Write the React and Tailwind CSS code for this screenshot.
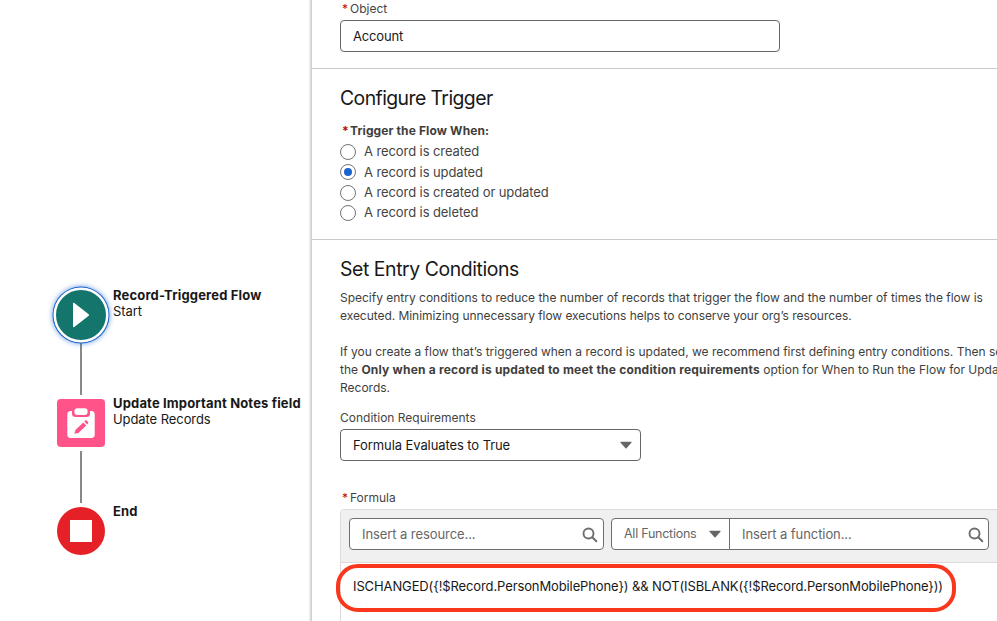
import React from "react";

const Star = () => <span className="mr-[2px] inline-block w-[6px] tracking-normal text-[#ba0517]">*</span>;

function Radio({ label, checked }) {
  return (
    <label className="flex h-[20.3px] items-center">
      <span className="flex size-4 items-center justify-center rounded-full border border-[#747474] bg-white">
        {checked && <span className="size-2 rounded-full bg-[#1b63cf]" />}
      </span>
      <span className="ml-2 text-[13px] tracking-[-0.09px] text-[#444]">{label}</span>
    </label>
  );
}

function Caret() {
  return (
    <svg width="12" height="8" viewBox="0 0 12 8" className="shrink-0">
      <path d="M1 .8h10c.5 0 .7.5.4.9L6.500 7.300a.7.7 0 0 1-1 0L.6 1.700C.3 1.300.5.8 1 .8z" fill="#666" />
    </svg>
  );
}

function Search() {
  return (
    <svg width="16" height="16" viewBox="0 0 16 16" className="mt-px shrink-0" fill="none" stroke="#706e6b">
      <circle cx="6.500" cy="6.500" r="5" strokeWidth="1.900" />
      <path d="M10.300 10.300l4 4" strokeWidth="2" strokeLinecap="round" />
    </svg>
  );
}

function Node({ icon, title, sub }) {
  return (
    <div className="flex h-12">
      {icon}
      <div className="ml-2 whitespace-nowrap text-[13px] leading-4 text-[#181818]">
        <div className="font-bold tracking-[0.16px]">{title}</div>
        {sub && <div className="tracking-[-0.08px]">{sub}</div>}
      </div>
    </div>
  );
}

function FlowCanvas() {
  return (
    <aside className="w-[312px] shrink-0 bg-white pl-[57px] pt-[287px]">
      <Node
        title="Record-Triggered Flow"
        sub="Start"
        icon={
          <div className="-ml-[3px] -mr-[3px] mt-px flex size-[54px] shrink-0 items-center justify-center rounded-full border-2 border-white bg-[#14756d] shadow-[0_0_0_0.5px_#fff,0_0_0_1.5px_#1b63cf,0_0_5px_2px_rgba(27,99,207,0.55)]">
            <svg width="54" height="54" viewBox="0 0 54 54" className="shrink-0">
              <path d="M19 15.600c0-.9.700-1 1.300-.5L34.700 26.200c.5.500.5 1.100 0 1.600L20.300 38.900c-.6.500-1.300.4-1.300-.5z" fill="#fff" />
            </svg>
          </div>
        }
      />
      <div className="ml-[23px] mt-2 h-[52px] w-[2px] bg-[#888]" />
      <Node
        title="Update Important Notes field"
        sub="Update Records"
        icon={
          <div className="mt-1 size-12 shrink-0 rounded bg-[#ff538a]">
            <svg width="48" height="48" viewBox="0 0 48 48">
              <rect x="10.300" y="12" width="27.400" height="27" rx="3.500" fill="#fff" />
              <path d="M15 10h18v4.500a3.600 3.600 0 0 1-3.600 3.600H18.600A3.600 3.600 0 0 1 15 14.500z" fill="#ff538a" />
              <rect x="17.400" y="9.200" width="13.200" height="6.900" rx="3" fill="#fff" />
              <path d="M17.400 34.800l1-3.700 7.900-7.700 3 3-7.900 7.600z M27.200 22.500l1-.9c.5-.5 1-.5 1.500 0l1.300 1.300c.5.500.5 1 0 1.500l-.9 1z" fill="#ff538a" />
            </svg>
          </div>
        }
      />
      <div className="ml-[23px] mt-2 h-[52px] w-[2px] bg-[#888]" />
      <Node
        title="End"
        icon={
          <div className="mt-1 flex size-12 shrink-0 items-center justify-center rounded-full bg-[#e52127]">
            <span className="size-[22px] bg-white" />
          </div>
        }
      />
    </aside>
  );
}

export default function App() {
  return (
    <div className="flex h-[621px] w-[997px] overflow-hidden bg-white font-['Inter','Liberation_Sans',sans-serif] text-[#181818]">
      <FlowCanvas />
      <main className="relative w-[685px] shrink-0 whitespace-nowrap bg-white text-[12px] shadow-[-1px_0_2px_1px_rgba(0,0,0,0.2)]">
        <section className="h-[69px] border-b border-[#c9c9c9] pl-7">
          <div className="h-5 pl-[2px] leading-[18px] text-[#444]"><Star />Object</div>
          <div className="flex h-8 w-[440px] items-center rounded border border-[#666] pl-3 pt-[2px] text-[13px] tracking-[-0.15px]">Account</div>
        </section>

        <section className="h-[171px] border-b border-[#c9c9c9] pl-7 pt-[17px]">
          <h2 className="h-6 text-[19.4px] leading-6 tracking-[-0.57px]">Configure Trigger</h2>
          <div className="mt-[12px] h-5 pl-[2px] font-bold leading-[18px] tracking-[0.12px] text-[#3e3e3c]"><Star />Trigger the Flow When:</div>
          <Radio label="A record is created" />
          <Radio label="A record is updated" checked />
          <Radio label="A record is created or updated" />
          <Radio label="A record is deleted" />
        </section>

        <section className="pl-7 pt-[17px]">
          <h2 className="h-6 text-[19.4px] leading-6 tracking-[-0.42px]">Set Entry Conditions</h2>
          <div className="mt-2 leading-[18px] text-[#3e3e3c]">
            <p className="tracking-[-0.01px]">Specify entry conditions to reduce the number of records that trigger the flow and the number of times the flow is</p>
            <p className="tracking-[-0.05px]">executed. Minimizing unnecessary flow executions helps to conserve your org’s resources.</p>
            <p className="mt-[18px]">If you create a flow that’s triggered when a record is updated, we recommend first defining entry conditions. Then select</p>
            <p>the <b className="font-bold tracking-[0.2px]">Only when a record is updated to meet the condition requirements</b> option for When to Run the Flow for Updated</p>
            <p>Records.</p>
          </div>
          <div className="mt-3 h-5 leading-[18px] text-[#444]">Condition Requirements</div>
          <div className="flex h-8 w-[301px] items-center justify-between rounded border border-[#666] pl-3 pr-2 text-[13px] tracking-[-0.09px]">
            <span className="pt-[2px]">Formula Evaluates to True</span>
            <Caret />
          </div>
          <div className="mt-7 h-5 pl-[2px] leading-[18px] text-[#444]"><Star />Formula</div>

          <div className="relative h-[140px] w-[700px] rounded-tl border border-[#dddbda] bg-white">
            <div className="flex h-[53px] rounded-tl border-b border-[#dddbda] bg-[#f0f0f0] pl-2 pt-2 text-[13px] tracking-[-0.08px] text-[#666]">
              <div className="flex h-8 w-[255px] items-center justify-between rounded border border-[#706e6b] bg-white pl-3 pr-[5px]">
                <span className="pt-[2px]">Insert a resource...</span>
                <Search />
              </div>
              <div className="ml-[7px] flex h-8 w-[119px] items-center justify-between rounded-l border border-[#706e6b] bg-white pl-3 pr-2">
                <span className="text-[12.500px] tracking-[-0.25px]">All Functions</span>
                <Caret />
              </div>
              <div className="-ml-px flex h-8 w-[260px] items-center justify-between rounded-r border border-[#706e6b] bg-white pl-3 pr-1">
                <span className="pt-[2px]">Insert a function...</span>
                <Search />
              </div>
            </div>
            <div className="pl-3 pt-[14px] text-[13px] leading-[18px] tracking-[-0.115px]">{"ISCHANGED({!$Record.PersonMobilePhone}) && NOT(ISBLANK({!$Record.PersonMobilePhone}))"}</div>
            <div className="absolute -left-[5px] top-[54px] h-[48px] w-[620px] rounded-[22px] border-4 border-[#fa371d]" />
          </div>
        </section>
      </main>
    </div>
  );
}
